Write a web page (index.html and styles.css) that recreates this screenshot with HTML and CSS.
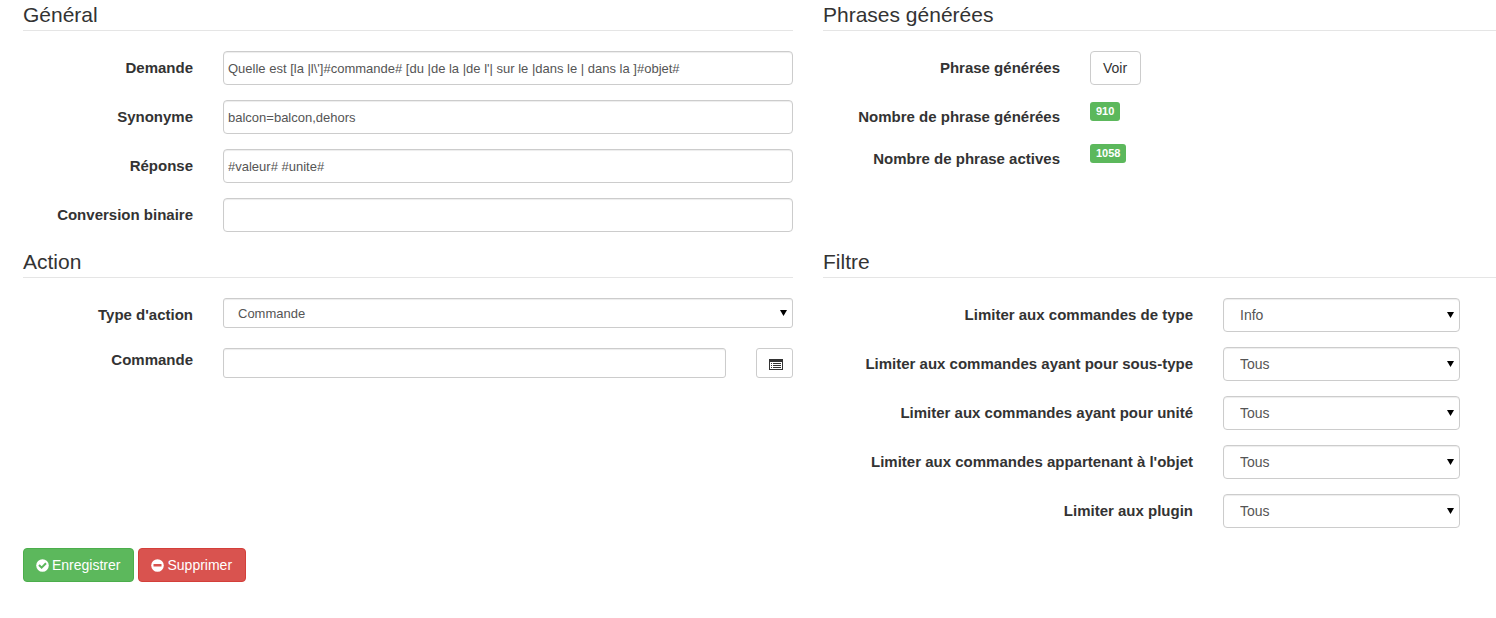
FILE: index.html
```html
<!DOCTYPE html>
<html lang="fr">
<head>
<meta charset="utf-8">
<meta name="viewport" content="width=device-width, initial-scale=1">
<title>Interactions</title>
<link rel="stylesheet" href="styles.css">
</head>
<body>
<form class="page">
  <div class="sections">
    <section class="section">
      <h2 class="legend">Général</h2>
      <div class="row">
        <label class="label" for="demande">Demande</label>
        <input class="control" id="demande" type="text" value="Quelle est [la |l\']#commande# [du |de la |de l'| sur le |dans le | dans la ]#objet#">
      </div>
      <div class="row">
        <label class="label" for="synonyme">Synonyme</label>
        <input class="control" id="synonyme" type="text" value="balcon=balcon,dehors">
      </div>
      <div class="row">
        <label class="label" for="reponse">Réponse</label>
        <input class="control" id="reponse" type="text" value="#valeur# #unite#">
      </div>
      <div class="row">
        <label class="label" for="conversion">Conversion binaire</label>
        <input class="control" id="conversion" type="text">
      </div>
    </section>

    <section class="section">
      <h2 class="legend">Phrases générées</h2>
      <div class="row row-phrases">
        <label class="label" for="voir">Phrase générées</label>
        <div><button class="btn btn-default" id="voir" type="button">Voir</button></div>
      </div>
      <div class="row row-phrases">
        <span class="label">Nombre de phrase générées</span>
        <div class="count"><span class="badge">910</span></div>
      </div>
      <div class="row row-phrases">
        <span class="label">Nombre de phrase actives</span>
        <div class="count"><span class="badge">1058</span></div>
      </div>
    </section>

    <section class="section">
      <h2 class="legend">Action</h2>
      <div class="row">
        <label class="label" for="type-action">Type d'action</label>
        <div class="select"><select class="control control-small" id="type-action"><option>Commande</option></select></div>
      </div>
      <div class="row">
        <label class="label" for="commande">Commande</label>
        <div class="picker">
          <input class="control control-small" id="commande" type="text">
          <button class="btn btn-default btn-icon" type="button" aria-label="Choisir une commande">
            <svg width="14" height="11" viewBox="0 0 14 11" fill="#333" shape-rendering="crispEdges" aria-hidden="true">
              <path fill-rule="evenodd" d="M0 0h14v11H0zM1 3v7h12V3z"/>
              <path d="M2 4h1v1H2zM4 4h8v1H4zM2 6h1v1H2zM4 6h8v1H4zM2 8h1v1H2zM4 8h8v1H4z"/>
            </svg>
          </button>
        </div>
      </div>
    </section>

    <section class="section">
      <h2 class="legend">Filtre</h2>
      <div class="row row-filter">
        <label class="label" for="f-type">Limiter aux commandes de type</label>
        <div class="select"><select class="control" id="f-type"><option>Info</option></select></div>
      </div>
      <div class="row row-filter">
        <label class="label" for="f-soustype">Limiter aux commandes ayant pour sous-type</label>
        <div class="select"><select class="control" id="f-soustype"><option>Tous</option></select></div>
      </div>
      <div class="row row-filter">
        <label class="label" for="f-unite">Limiter aux commandes ayant pour unité</label>
        <div class="select"><select class="control" id="f-unite"><option>Tous</option></select></div>
      </div>
      <div class="row row-filter">
        <label class="label" for="f-objet">Limiter aux commandes appartenant à l'objet</label>
        <div class="select"><select class="control" id="f-objet"><option>Tous</option></select></div>
      </div>
      <div class="row row-filter">
        <label class="label" for="f-plugin">Limiter aux plugin</label>
        <div class="select"><select class="control" id="f-plugin"><option>Tous</option></select></div>
      </div>
    </section>
  </div>

  <div class="actions">
    <button class="btn btn-success" type="button">
      <svg width="13" height="13" viewBox="0 0 13 13" aria-hidden="true">
        <circle cx="6.5" cy="6.5" r="6.3" fill="#fff"/>
        <path d="M3 6 5.6 8.6 10 4.3" fill="none" stroke="#5cb85c" stroke-width="2"/>
      </svg>
      Enregistrer
    </button>
    <button class="btn btn-danger" type="button">
      <svg width="13" height="13" viewBox="0 0 13 13" aria-hidden="true">
        <circle cx="6.5" cy="6.5" r="6.3" fill="#fff"/>
        <path d="M2.5 5h8v2.5h-8z" fill="#d9534f"/>
      </svg>
      Supprimer
    </button>
  </div>
</form>
</body>
</html>
```
FILE: styles.css
```css
* {
  box-sizing: border-box;
}

body {
  margin: 0;
  background: #fff;
  color: #333;
  font: 14px/20px "Liberation Sans", Arial, sans-serif;
}

.page {
  padding-left: 23px;
}

.sections {
  display: grid;
  grid-template-columns: 770fr 673fr;
  column-gap: 30px;
}

.section {
  min-width: 0;
}

.legend {
  margin: 0 0 20px;
  border-bottom: 1px solid #e5e5e5;
  font-size: 21px;
  font-weight: 400;
  line-height: 30px;
}

.row {
  display: grid;
  grid-template-columns: 17fr 57fr;
  column-gap: 30px;
  align-items: start;
  margin-bottom: 15px;
}

.row-phrases {
  grid-template-columns: 237fr 406fr;
}

.row-filter {
  grid-template-columns: 370fr 237fr;
  padding-right: 36px;
}

.label {
  padding-top: 7px;
  font-size: 15px;
  font-weight: 700;
  text-align: right;
}

.control {
  display: block;
  width: 100%;
  min-width: 0;
  height: 34px;
  margin: 0;
  padding: 0 4px;
  border: 1px solid #ccc;
  border-radius: 4px;
  background: #fff;
  box-shadow: inset 0 1px 1px rgba(0, 0, 0, 0.075);
  color: #555;
  font-family: inherit;
  font-size: 13px;
}

.control-small {
  height: 30px;
  border-radius: 3px;
}

.select {
  position: relative;
}

.select .control {
  appearance: none;
  padding: 0 16px;
  font-size: 14px;
}

.select .control-small {
  padding: 0 14px;
  font-size: 13px;
}

.select::after {
  content: "";
  position: absolute;
  top: calc(50% - 3px);
  right: 6px;
  width: 7px;
  height: 6px;
  background: #000;
  clip-path: polygon(0 0, 100% 0, 50% 100%);
  pointer-events: none;
}

.picker {
  display: flex;
  gap: 30px;
  padding-top: 5px;
}

.btn {
  display: inline-flex;
  align-items: center;
  gap: 3px;
  height: 34px;
  padding: 0 13px 0 12px;
  border: 1px solid;
  border-radius: 4px;
  font: inherit;
  cursor: pointer;
}

.btn-default {
  border-color: #ccc;
  background: #fff;
  color: #333;
}

.btn-icon {
  flex: none;
  height: 30px;
  padding: 2px 9px 0 12px;
  border-radius: 3px;
}

.btn-success {
  border-color: #4cae4c;
  background: #5cb85c;
  color: #fff;
}

.btn-danger {
  border-color: #d43f3a;
  background: #d9534f;
  color: #fff;
}

.count {
  display: flex;
  padding-top: 2px;
}

.badge {
  padding: 0 6px;
  border-radius: 3px;
  background: #5cb85c;
  color: #fff;
  font-size: 11px;
  font-weight: 700;
  line-height: 19px;
}

.actions {
  display: flex;
  gap: 4px;
  padding: 5px 0 36px;
}
```
